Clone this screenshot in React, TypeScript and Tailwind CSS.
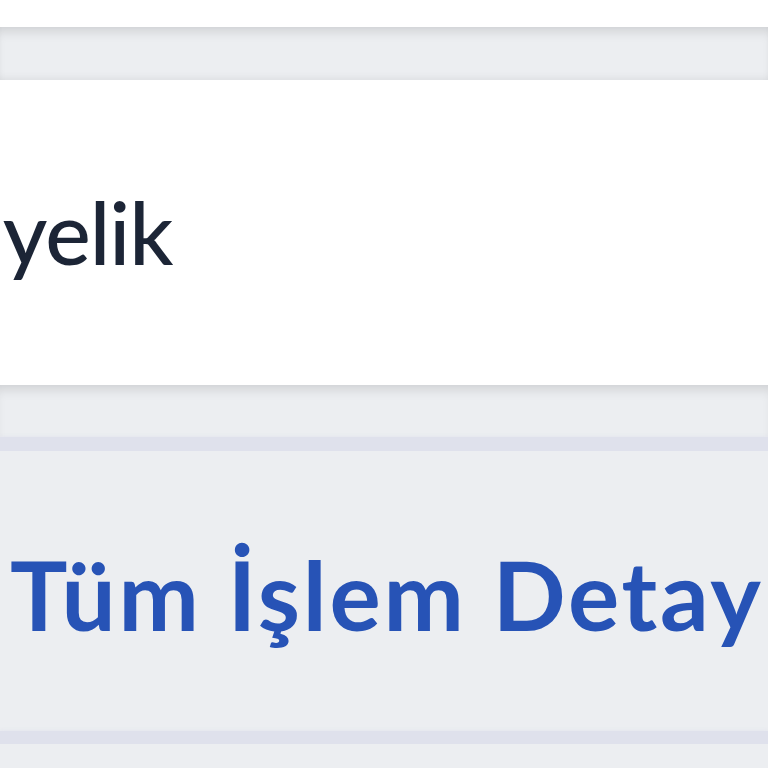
export default function App() {
  const font = "font-['Lato','Noto_Sans',sans-serif]";

  return (
    <div className={`w-[768px] h-[768px] overflow-hidden bg-[#eceef1] ${font}`}>
      {/* top strip */}
      <div className="h-[27px] bg-white" />
      <div className="h-[53px] bg-[#eceef1] shadow-[inset_0_10px_12px_-6px_rgba(0,0,0,0.13),inset_0_-6px_8px_-5px_rgba(0,0,0,0.08)]" />

      {/* membership card */}
      <div className="h-[305px] bg-white flex items-center">
        <span className="-ml-[59px] mt-[-2px] text-[86px] leading-none font-medium text-[#1c2536] tracking-[-1px]">
          Üyelik
        </span>
      </div>

      <div className="h-[52px] bg-[#eceef1] shadow-[inset_0_10px_12px_-6px_rgba(0,0,0,0.13)]" />
      <div className="h-[14px] bg-[#dfe1ec] shadow-[0_0_4px_rgba(223,225,236,0.9)]" />

      {/* transaction details link */}
      <div className="h-[280px] bg-[#eceef1] flex items-center pl-[10px]">
        <span className="mt-[6px] text-[96px] leading-none font-bold text-[#2753b6] whitespace-nowrap tracking-[2.8px]">
          Tüm İşlem Detay
        </span>
      </div>
      <div className="h-[13px] bg-[#dfe1ec] shadow-[0_0_4px_rgba(223,225,236,0.9)]" />
      <div className="h-[24px] bg-[#eceef1]" />
    </div>
  );
}
